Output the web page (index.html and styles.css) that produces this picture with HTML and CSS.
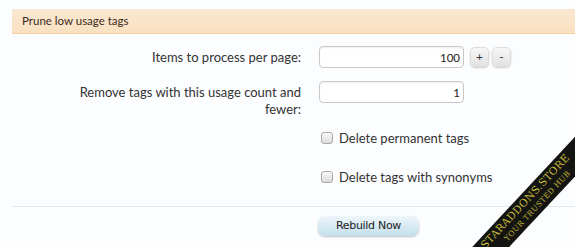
FILE: index.html
```html
<!DOCTYPE html>
<html>
<head>
<meta charset="utf-8">
<link rel="stylesheet" href="styles.css">
</head>
<body>
<div class="page">
  <form class="panel">
    <h3 class="head">Prune low usage tags</h3>
    <div class="form">
      <div class="row">
        <label class="lbl">Items to process per page:</label>
        <div class="ctrl">
          <input class="txt" type="text" value="100">
          <button type="button" class="spin first">+</button>
          <button type="button" class="spin">-</button>
        </div>
      </div>
      <div class="row row2">
        <label class="lbl">Remove tags with this usage count and fewer:</label>
        <div class="ctrl">
          <input class="txt" type="text" value="1">
        </div>
      </div>
      <div class="row chk">
        <div></div>
        <label class="cb"><span class="box"></span>Delete permanent tags</label>
      </div>
      <div class="row chk">
        <div></div>
        <label class="cb"><span class="box"></span>Delete tags with synonyms</label>
      </div>
    </div>
    <div class="submit">
      <div></div>
      <div><button type="button" class="rebuild">Rebuild Now</button></div>
    </div>
  </form>
  <div class="ribbon">
    <div class="r1">STARADDONS.STORE</div>
    <div class="r2">YOUR TRUSTED HUB</div>
  </div>
</div>
</body>
</html>
```
FILE: styles.css
```css
html, body {
  margin: 0;
  padding: 0;
  background: #fcfdff;
  overflow: hidden;
}
.page {
  position: relative;
  width: 575px;
  height: 247px;
  overflow: hidden;
  font-family: "Lato", "Open Sans", sans-serif;
  color: #333;
}
.panel {
  margin: 9px 0 0 12px;
}
.head {
  margin: 0;
  height: 24px;
  line-height: 24px;
  padding-left: 10px;
  font-size: 11.5px;
  font-weight: normal;
  color: #3a2c1c;
  background: linear-gradient(#fbe8d0, #f9e0c2);
  border-bottom: 1px solid #f5cf9f;
}
.form {
  padding-top: 12px;
}
.row {
  display: grid;
  grid-template-columns: 289px 1fr;
  column-gap: 18px;
  align-items: start;
  font-size: 13px;
}
.lbl {
  text-align: right;
  line-height: 17px;
  padding-top: 3px;
}
.row2 {
  margin-top: 13px;
}
.row2 .lbl {
  padding-left: 40px;
}
.ctrl {
  display: flex;
  align-items: center;
  gap: 3px;
}
.txt {
  box-sizing: border-box;
  width: 145px;
  height: 22px;
  border: 1px solid #c9c9c9;
  border-radius: 4px;
  background: #fff;
  box-shadow: inset 0 1px 2px rgba(0,0,0,0.06);
  text-align: right;
  padding: 0 3px 0 4px;
  font-family: "Lato", sans-serif;
  font-size: 11.5px;
  color: #222;
  margin: 0;
}
.spin {
  box-sizing: border-box;
  width: 19px;
  height: 20px;
  margin: 0;
  padding: 0;
  border: 1px solid #dedede;
  border-radius: 5px;
  background: linear-gradient(#f7f7f7, #e2e2e2);
  box-shadow: 0 1px 2px rgba(0,0,0,0.2);
  font-family: "Lato", sans-serif;
  font-size: 12px;
  color: #333;
  line-height: 18px;
}
.spin.first {
  margin-left: 3px;
}
.chk {
  height: 39px;
  align-items: center;
}
.cb {
  display: flex;
  align-items: center;
  gap: 6px;
  padding-left: 2px;
}
.box {
  box-sizing: border-box;
  width: 12px;
  height: 12px;
  border: 1px solid #a9a9a9;
  border-radius: 3px;
  background: linear-gradient(#fafafa, #dcdcdc);
}
.submit {
  display: grid;
  grid-template-columns: 289px 1fr;
  column-gap: 17px;
  border-top: 1px solid #e3e6ea;
  margin-top: 10px;
  padding-top: 6px;
}
.rebuild {
  box-sizing: border-box;
  width: 101px;
  height: 20px;
  margin: 0;
  padding: 0;
  border: none;
  border-radius: 7px;
  background: linear-gradient(#eef6fa, #c4dfec);
  box-shadow: 0 1px 2px rgba(0,0,0,0.25);
  font-family: "DejaVu Sans", sans-serif;
  font-size: 11px;
  letter-spacing: -0.3px;
  color: #222;
}
.ribbon {
  position: absolute;
  left: 425px;
  top: 186px;
  width: 220px;
  height: 27px;
  transform: rotate(-47deg);
  background: #141412;
  color: #c2b93a;
  font-family: "DejaVu Serif", "Liberation Serif", serif;
  text-align: center;
  line-height: 1;
}
.r1 {
  font-size: 10.5px;
  letter-spacing: 0.3px;
  padding-top: 2px;
  padding-right: 16px;
}
.r2 {
  font-size: 7.5px;
  letter-spacing: 0.5px;
  padding-top: 3px;
  padding-right: 6px;
}
```
